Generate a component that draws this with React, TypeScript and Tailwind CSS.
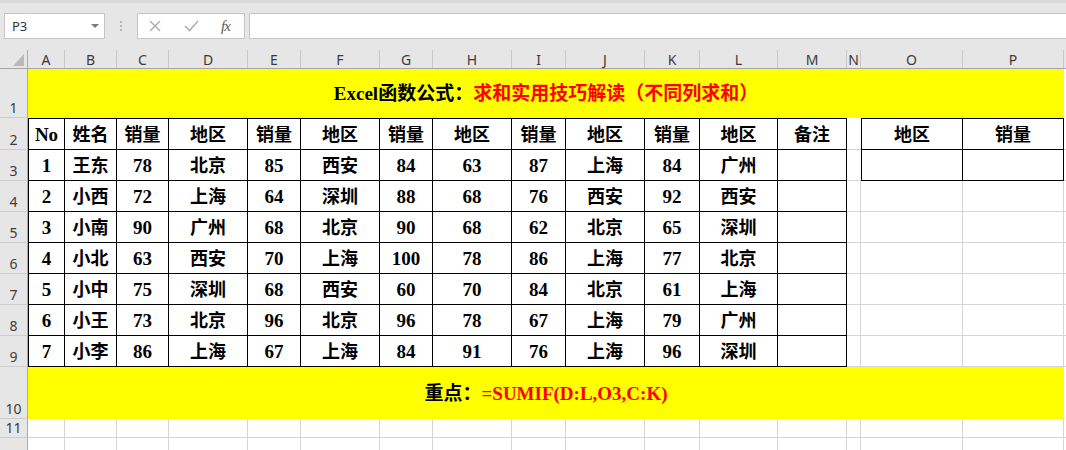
import type {ReactNode} from 'react';

const COLS = [
  'w-[37px]',
  'w-[52px]',
  'w-[52px]',
  'w-[79px]',
  'w-[53px]',
  'w-[79px]',
  'w-[53px]',
  'w-[79px]',
  'w-[54px]',
  'w-[79px]',
  'w-[55px]',
  'w-[78px]',
  'w-[69px]',
  'w-[14px]',
  'w-[102px]',
  'w-[101px]'
];

const LETTERS = 'ABCDEFGHIJKLMNOP'.split('');

const HEAD = ['No', '姓名', '销量', '地区', '销量', '地区', '销量', '地区', '销量', '地区', '销量', '地区', '备注'];

const ROWS = [
  ['1', '王东', '78', '北京', '85', '西安', '84', '63', '87', '上海', '84', '广州', ''],
  ['2', '小西', '72', '上海', '64', '深圳', '88', '68', '76', '西安', '92', '西安', ''],
  ['3', '小南', '90', '广州', '68', '北京', '90', '68', '62', '北京', '65', '深圳', ''],
  ['4', '小北', '63', '西安', '70', '上海', '100', '78', '86', '上海', '77', '北京', ''],
  ['5', '小中', '75', '深圳', '68', '西安', '60', '70', '84', '北京', '61', '上海', ''],
  ['6', '小王', '73', '北京', '96', '北京', '96', '78', '67', '上海', '79', '广州', ''],
  ['7', '小李', '86', '上海', '67', '上海', '84', '91', '76', '上海', '96', '深圳', '']
];

const serif = "font-['Liberation_Serif','Noto_Sans_CJK_SC',serif] font-bold text-black";

const RowHead = ({label, className}: {label?: string; className: string}) => (
  <div
    className={`w-[28px] shrink-0 ${className} bg-[#e6e6e6] border-r border-b border-r-[#ababab] border-b-[#cdcdcd] flex items-end justify-center text-[14px] leading-[16px] text-[#3c3c3c] font-['Noto_Sans',sans-serif] pb-[1px]`}
  >
    {label}
  </div>
);

const isCjk = (s: string) => /[\u4e00-\u9fff]/.test(s);

// border classes for a cell in the data block (r = 0 is sheet row 2)
const cellBorder = (r: number, c: number) => {
  const top = r === 0;
  if (c <= 12) {
    if (c === 0) {
      return top
        ? 'border-l border-t border-r border-b border-black'
        : 'border-l border-r border-b border-black';
    }
    return top ? 'border-t border-r border-b border-black' : 'border-r border-b border-black';
  }
  if (c === 13) {
    if (r === 0) return 'border-t border-b border-t-transparent border-b-[#d4d4d4]';
    if (r === 1) return 'border-b border-[#d4d4d4]';
    return 'border-r border-b border-[#d4d4d4]';
  }
  if (c === 14) {
    if (r === 0) return 'border-l border-t border-r border-b border-black';
    if (r === 1) return 'border-l border-r border-b border-black';
    return 'border-r border-b border-[#d4d4d4]';
  }
  if (r === 0) return 'border-t border-r border-b border-black';
  if (r === 1) return 'border-r border-b border-black';
  return 'border-r border-b border-[#d4d4d4]';
};

const Cell = ({w, className, children}: {w: string; className: string; children?: ReactNode}) => (
  <div className={`${w} shrink-0 flex items-center justify-center ${className}`}>{children}</div>
);

const DataRow = ({r, values}: {r: number; values: string[]}) => {
  const full = [...values, '', ...(r === 0 ? ['地区', '销量'] : ['', ''])];
  return (
    <div className={`flex ${r === 0 ? 'h-[32px]' : 'h-[31px]'}`}>
      <RowHead label={String(r + 2)} className="h-full" />
      {COLS.map((w, c) => {
        const v = full[c];
        return (
          <Cell key={c} w={w} className={`h-full bg-white ${cellBorder(r, c)}`}>
            {v && (
              <span
                className={`${serif} leading-[20px] pt-[2px] ${isCjk(v) ? 'text-[18px]' : 'text-[19px]'}`}
              >
                {v}
              </span>
            )}
          </Cell>
        );
      })}
      <div
        className={`flex-1 h-full bg-white border-b border-b-[#d4d4d4] ${r === 0 ? 'border-t border-t-transparent' : ''}`}
      />
    </div>
  );
};

const FormulaBar = () => (
  <div className="h-[50px] bg-[#e6e6e6] border-t-[3px] border-[#d9d9d9] flex items-start pt-[10px] pl-[4px]">
    <div className="w-[101px] h-[26px] shrink-0 bg-white border border-[#c6c6c6] flex items-center justify-between pl-[7px] pr-[5px]">
      <span className="text-[13px] text-[#333] font-['Noto_Sans',sans-serif] leading-none">P3</span>
      <svg width="8" height="4" viewBox="0 0 8 4">
        <polygon points="0,0 8,0 4,4" fill="#7a7a7a" />
      </svg>
    </div>
    <div className="w-[32px] h-[26px] shrink-0 flex flex-col items-center justify-center gap-[2px]">
      <div className="w-[2px] h-[2px] bg-[#b5b5b5]" />
      <div className="w-[2px] h-[2px] bg-[#b5b5b5]" />
      <div className="w-[2px] h-[2px] bg-[#b5b5b5]" />
    </div>
    <div className="w-[108px] h-[26px] shrink-0 bg-white border border-[#c6c6c6] flex items-center pl-[11px]">
      <svg width="12" height="12" viewBox="0 0 12 12">
        <path d="M1 1 L11 11 M11 1 L1 11" stroke="#a8a8a8" strokeWidth="1.3" />
      </svg>
      <svg width="15" height="12" viewBox="0 0 15 12" className="ml-[23px]">
        <path d="M1 6 L5.5 10.5 L14 1" stroke="#b0b0b0" strokeWidth="1.6" fill="none" />
      </svg>
      <span className="ml-[22px] text-[15px] italic text-[#5a5a5a] font-['Liberation_Serif',serif] leading-none tracking-[-1px]">
        fx
      </span>
    </div>
    <div className="ml-[4px] w-[900px] h-[26px] shrink-0 bg-white border border-[#c6c6c6]" />
  </div>
);

const ColumnHeader = () => (
  <div className="flex h-[19px] bg-[#e6e6e6] border-b border-[#a6a6a6]">
    <div className="w-[28px] shrink-0 h-full border-r border-[#ababab] flex items-end justify-end pr-[3px] pb-[2px]">
      <svg width="11" height="12" viewBox="0 0 11 12">
        <polygon points="11,0 11,12 0,12" fill="#b9b9b9" />
      </svg>
    </div>
    {COLS.map((w, c) => (
      <div
        key={c}
        className={`${w} shrink-0 h-full border-r border-[#c8c8c8] flex items-end justify-center text-[14px] leading-[17px] text-[#3a3a3a] font-['Noto_Sans',sans-serif]`}
      >
        {LETTERS[c]}
      </div>
    ))}
    <div className="flex-1" />
  </div>
);

export default function App() {
  return (
    <div className="w-[1066px] h-[450px] overflow-hidden bg-white">
      <FormulaBar />
      <ColumnHeader />

      <div className="flex h-[49px]">
        <RowHead label="1" className="h-full" />
        <div className="w-[1036px] shrink-0 h-full bg-[#ffff00] flex items-center justify-center">
          <span className={`${serif} text-[19px] leading-[20px] pt-[1px]`}>
            Excel函数公式：<span className="text-[#ff0000]">求和实用技巧解读（不同列求和）</span>
          </span>
        </div>
        <div className="flex-1 h-full bg-white" />
      </div>

      <DataRow r={0} values={HEAD} />
      {ROWS.map((row, i) => (
        <DataRow key={i} r={i + 1} values={row} />
      ))}

      <div className="flex h-[52px]">
        <RowHead label="10" className="h-full" />
        <div className="w-[1036px] shrink-0 h-full bg-[#ffff00] flex items-center justify-center">
          <span className={`${serif} text-[19px] leading-[20px] pt-[1px]`}>
            重点：<span className="text-[#ff0000]">=SUMIF(D:L,O3,C:K)</span>
          </span>
        </div>
        <div className="flex-1 h-full bg-white" />
      </div>

      <div className="flex h-[19px]">
        <RowHead label="11" className="h-full" />
        {COLS.map((w, c) => (
          <div key={c} className={`${w} shrink-0 h-full border-r border-b border-[#d4d4d4]`} />
        ))}
        <div className="flex-1 h-full border-b border-[#d4d4d4]" />
      </div>
      {/* row 12: only its top strip is in view, label falls below the fold */}
      <div className="flex h-[19px]">
        <div className="w-[28px] shrink-0 h-full bg-[#e6e6e6] border-r border-[#ababab]" />
        {COLS.map((w, c) => (
          <div key={c} className={`${w} shrink-0 h-full border-r border-[#d4d4d4]`} />
        ))}
        <div className="flex-1 h-full" />
      </div>
    </div>
  );
}
